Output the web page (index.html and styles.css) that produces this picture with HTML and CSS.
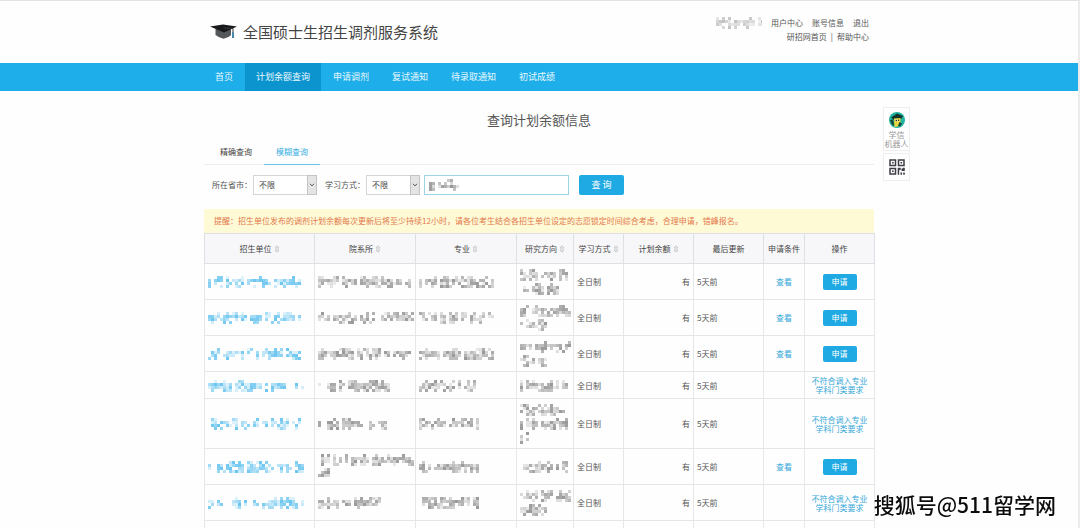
FILE: index.html
```html
<!DOCTYPE html>
<html lang="zh-CN">
<head>
<meta charset="utf-8">
<meta name="viewport" content="width=device-width, initial-scale=1">
<title>全国硕士生招生调剂服务系统</title>
<link rel="stylesheet" href="styles.css">
</head>
<body>
<svg class="sprite" aria-hidden="true">
  <symbol id="sort" viewBox="0 0 6 8"><path d="M1 3 3 .8 5 3zM1 5 3 7.2 5 5z" fill="#fff" stroke="#b9bcc0" stroke-width=".8"/></symbol>
  <symbol id="chevron" viewBox="0 0 6 4"><path d="M1 .8 3 2.9 5 .8" fill="none" stroke="#555" stroke-width="1"/></symbol>
</svg>
<header class="wrap header">
  <div class="brand">
    <svg class="cap" viewBox="0 0 27 16" aria-hidden="true">
      <path d="M5.500 5v6q3 2.500 8 3.800 5-1 7.500-3.500V5z" fill="#55585b"/>
      <path d="M0 2.600 13 .5 27 2.600 14 8.500z" fill="#17191b"/>
      <path d="M13.500 4 23 4.500V9" fill="none" stroke="#34383c" stroke-width="1"/>
      <path d="M22 8h1.800l.4 6h-2.200z" fill="#4b88ac"/>
    </svg>
    <h1 class="brand-name">全国硕士生招生调剂服务系统</h1>
  </div>
  <div class="account">
    <div class="account-row">
      <span class="mosaic faint" data-lines="49"></span>
      <a href="#">用户中心</a><a href="#">账号信息</a><a href="#">退出</a>
    </div>
    <div class="account-row tight"><a href="#">研招网首页</a><span>|</span><a href="#">帮助中心</a></div>
  </div>
</header>
<nav class="nav">
  <div class="wrap nav-items">
    <a href="#">首页</a><a href="#" class="active">计划余额查询</a><a href="#">申请调剂</a><a href="#">复试通知</a><a href="#">待录取通知</a><a href="#">初试成绩</a>
  </div>
</nav>
<main class="wrap main">
  <h2 class="title">查询计划余额信息</h2>
  <div class="tabs"><a href="#">精确查询</a><a href="#" class="active">模糊查询</a></div>
  <form class="filters">
    <label for="province">所在省市：</label>
    <span class="select"><select id="province"><option>不限</option></select><span class="arrow"><svg><use href="#chevron"/></svg></span></span>
    <label for="mode" class="label-mode">学习方式：</label>
    <span class="select narrow"><select id="mode"><option>不限</option></select><span class="arrow"><svg><use href="#chevron"/></svg></span></span>
    <span class="keyword"><input type="text" aria-label="关键字"><span class="mosaic" data-lines="30"></span></span>
    <button type="button" class="search">查 询</button>
  </form>
  <p class="notice">提醒：招生单位发布的调剂计划余额每次更新后将至少持续12小时，请各位考生结合各招生单位设定的志愿锁定时间综合考虑，合理申请，错峰报名。</p>
  <table class="grid">
    <colgroup><col class="c-unit"><col class="c-dept"><col class="c-major"><col class="c-dir"><col class="c-mode"><col class="c-left"><col class="c-time"><col class="c-cond"><col class="c-act"></colgroup>
    <thead>
      <tr>
        <th>招生单位<svg><use href="#sort"/></svg></th><th>院系所<svg><use href="#sort"/></svg></th><th>专业<svg><use href="#sort"/></svg></th><th>研究方向<svg><use href="#sort"/></svg></th><th>学习方式<svg><use href="#sort"/></svg></th><th>计划余额<svg><use href="#sort"/></svg></th><th>最后更新</th><th>申请条件</th><th>操作</th>
      </tr>
    </thead>
    <tbody>
      <tr><td><span class="mosaic blue" data-lines="93"></span></td><td><span class="mosaic" data-lines="93"></span></td><td><span class="mosaic" data-lines="75"></span></td><td><span class="mosaic" data-lines="51,42"></span></td><td>全日制</td><td class="right">有</td><td>5天前</td><td class="center"><a href="#">查看</a></td><td class="center"><button type="button" class="apply">申请</button></td></tr>
      <tr><td><span class="mosaic blue" data-lines="93"></span></td><td><span class="mosaic" data-lines="96"></span></td><td><span class="mosaic" data-lines="75"></span></td><td><span class="mosaic" data-lines="51,27"></span></td><td>全日制</td><td class="right">有</td><td>5天前</td><td class="center"><a href="#">查看</a></td><td class="center"><button type="button" class="apply">申请</button></td></tr>
      <tr><td><span class="mosaic blue" data-lines="93"></span></td><td><span class="mosaic" data-lines="93"></span></td><td><span class="mosaic" data-lines="75"></span></td><td><span class="mosaic" data-lines="51,27"></span></td><td>全日制</td><td class="right">有</td><td>5天前</td><td class="center"><a href="#">查看</a></td><td class="center"><button type="button" class="apply">申请</button></td></tr>
      <tr><td><span class="mosaic blue" data-lines="96"></span></td><td><span class="mosaic" data-lines="72"></span></td><td><span class="mosaic" data-lines="60"></span></td><td><span class="mosaic" data-lines="48"></span></td><td>全日制</td><td class="right">有</td><td>5天前</td><td></td><td class="center"><a href="#" class="reason">不符合调入专业<br>学科门类要求</a></td></tr>
      <tr><td><span class="mosaic blue" data-lines="93"></span></td><td><span class="mosaic" data-lines="69"></span></td><td><span class="mosaic" data-lines="60"></span></td><td><span class="mosaic" data-lines="51,48,9"></span></td><td>全日制</td><td class="right">有</td><td>5天前</td><td></td><td class="center"><a href="#" class="reason">不符合调入专业<br>学科门类要求</a></td></tr>
      <tr><td><span class="mosaic blue" data-lines="96"></span></td><td><span class="mosaic" data-lines="96,12"></span></td><td><span class="mosaic" data-lines="60"></span></td><td><span class="mosaic" data-lines="48"></span></td><td>全日制</td><td class="right">有</td><td>5天前</td><td class="center"><a href="#">查看</a></td><td class="center"><button type="button" class="apply">申请</button></td></tr>
      <tr><td><span class="mosaic blue" data-lines="96"></span></td><td><span class="mosaic" data-lines="69"></span></td><td><span class="mosaic" data-lines="60"></span></td><td><span class="mosaic" data-lines="51,27"></span></td><td>全日制</td><td class="right">有</td><td>5天前</td><td></td><td class="center"><a href="#" class="reason">不符合调入专业<br>学科门类要求</a></td></tr>
      <tr><td></td><td></td><td></td><td></td><td></td><td></td><td></td><td></td><td></td></tr>
    </tbody>
  </table>
  <aside class="side">
    <a href="#" class="side-box">
      <svg class="robot" viewBox="0 0 16 16" aria-hidden="true">
        <circle cx="8" cy="8" r="8" fill="#20b3a0"/>
        <path d="M2 5.500 8 1.500 14 4 12 7 5 8z" fill="#12352c"/>
        <path d="M1 8 4 7.500 5.500 14 3 13z" fill="#174c36"/>
        <path d="M5 6.500 11.500 6v4L9 14.500 5.500 15z" fill="#e6d53c"/>
        <path d="M6 7.500h4v2H6z" fill="#fff3a8"/><circle cx="7.300" cy="8.500" r=".8" fill="#222"/><circle cx="9.500" cy="8.300" r=".7" fill="#222"/>
        <path d="M10.500 10 13 11.500 11 14.500 9 14z" fill="#1b4234"/>
      </svg>
      <span>学信<br>机器人</span>
    </a>
    <a href="#" class="side-box code" aria-label="二维码">
      <svg class="qr" viewBox="0 0 16 16" aria-hidden="true">
        <g fill="none" stroke="#3e3e46" stroke-width="1.500"><path d="M1 1h5.500v5.500H1zM9.500 1H15v5.500H9.500zM1 9.500h5.500V15H1z"/></g>
        <path d="M3 3h1.600v1.600H3zM11.500 3h1.600v1.600h-1.600zM3 11.500h1.600v1.600H3zM8.700 8.700h3V11h-1.500v4.700H8.700zM12.500 9.500h1.300V8.700h2V12h-3.300zM11.500 13.500h1.600v2.200h-1.600zM14.200 13.500h1.600v2.200h-1.600z" fill="#3e3e46"/>
      </svg>
    </a>
  </aside>
</main>
<div class="watermark">搜狐号@511留学网</div>
<script src="mosaic.js"></script>
</body>
</html>
```

FILE: styles.css
```css
* { box-sizing: border-box; }
body {
  margin: 0;
  height: 100vh;
  overflow: hidden;
  border-top: 1px solid #e2e2e2;
  border-right: 2px solid #ececee;
  background: #fefefe;
  color: #555;
  font: 8px/14px "Noto Sans CJK SC", sans-serif;
}
a { color: inherit; text-decoration: none; }
h1, h2, p { margin: 0; font-weight: 400; }
button, input, select { font: inherit; }
.sprite { position: absolute; width: 0; height: 0; }
.wrap { width: 100%; max-width: 670px; margin: 0 auto; }

.header { display: flex; justify-content: space-between; height: 62px; }
.brand { display: flex; align-items: center; gap: 6px; padding-left: 6px; }
.cap { width: 27px; height: 16px; }
.brand-name { font-size: 15px; line-height: 20px; color: #444; }
.account { padding: 15px 5px 0 0; }
.account-row { display: flex; justify-content: flex-end; align-items: center; gap: 9px; }
.account-row.tight { gap: 4px; }

.nav { background: #1eaee9; color: #e8f8ff; }
.nav-items { display: flex; gap: 1px; font-size: 9px; line-height: 28px; }
.nav-items a { padding: 0 11px; }
.nav-items .active { background: #0c94cf; }

.main { position: relative; }
.title { padding-top: 18px; font-size: 13px; line-height: 22px; text-align: center; color: #555; }
.tabs { display: flex; margin-top: 8px; padding-left: 4px; border-bottom: 1px solid #eee; line-height: 25px; color: #444; }
.tabs a { padding: 0 12px; margin-bottom: -1px; border-bottom: 1px solid transparent; }
.tabs .active { border-color: #6cc4e4; color: #35aee0; }

.filters { display: flex; align-items: center; margin-top: 10px; padding-left: 8px; }
.filters label { width: 41px; white-space: nowrap; }
.filters .label-mode { margin-left: 8px; }
.select { display: grid; width: 64px; height: 20px; }
.select.narrow { width: 54px; margin-right: 4px; }
.select select, .arrow { grid-area: 1 / 1; }
.select select { appearance: none; width: 100%; padding: 0 5px; border: 1px solid #d5d5d5; border-radius: 0; background: #fff; color: #444; }
.arrow { display: grid; place-items: center; justify-self: end; width: 10px; border: 1px solid #c4c4c4; background: #e4e4e4; pointer-events: none; }
.arrow svg { width: 6px; height: 4px; }
.keyword { display: grid; align-items: center; width: 145px; }
.keyword input, .keyword .mosaic { grid-area: 1 / 1; }
.keyword input { width: 100%; height: 20px; border: 1px solid #9ed2e6; background: #fff; outline: 0; }
.keyword .mosaic { margin-left: 5px; pointer-events: none; }
.search { width: 45px; height: 20px; margin-left: 10px; padding: 0; border: 0; border-radius: 2px; background: #20aae3; color: #fff; font-size: 9px; }

.notice { margin-top: 14px; padding: 0 10px; background: #fffad6; color: #e2794b; line-height: 24px; white-space: nowrap; }

.grid { width: 100%; table-layout: fixed; border-collapse: collapse; }
.c-unit { width: 110px; }
.c-dept, .c-major { width: 101px; }
.c-dir { width: 57px; }
.c-mode { width: 50px; }
.c-left, .c-time, .c-act { width: 70px; }
.c-cond { width: 41px; }
.grid th { height: 30px; padding: 0; border: 1px solid #dfe0e3; background: #f7f7f9; color: #444; font-weight: 400; white-space: nowrap; }
.grid th svg { width: 6px; height: 8px; margin-left: 2px; vertical-align: -1px; }
.grid td { height: 27px; padding: 4px 3px 3px; border: 1px solid #e6e6e9; }
.grid .right { text-align: right; }
.grid .center { padding: 0; text-align: center; }
.center a { color: #35a8d8; }
.center .reason { display: block; line-height: 9px; }
.apply { display: block; width: 34px; height: 16px; margin: 0 auto; padding: 0; border: 0; border-radius: 2px; background: #20aae3; color: #fff; line-height: 16px; }

.mosaic { display: block; color: #777; }
.mosaic.blue { color: #38b2ea; }
.mosaic.faint { color: #aaa; }
.mosaic svg { display: block; height: 14px; }

.side { position: absolute; top: 16px; left: 100%; display: grid; gap: 2px; width: 27px; margin-left: 9px; }
.side-box { display: grid; justify-items: center; padding: 4px 0 2px; border: 1px solid #eee; background: #fff; color: #999; line-height: 9px; text-align: center; white-space: nowrap; }
.side-box span { margin-top: 2px; }
.side-box.code { padding: 5px 0; }
.robot, .qr { width: 16px; height: 16px; }

.watermark {
  position: fixed;
  right: 24px;
  bottom: 10px;
  color: #0c0c0c;
  font-size: 21px;
  font-weight: 500;
  line-height: 28px;
  text-shadow: 1px 1px 0 #fff, -1px -1px 0 #fff;
}
```

FILE: mosaic.js
```js
// Masks private text with rows of pixel blocks.
let seed = 7;
const random = () => (seed = (seed * 16807) % 2147483647) / 2147483647;
const density = [0.35, 0.85, 0.8, 0.4];

document.querySelectorAll(".mosaic").forEach((el) => {
  el.innerHTML = el.dataset.lines.split(",").map((w) => {
    let blocks = "";
    for (let x = 0; x < w; x += 3) {
      if (random() < 0.1) continue;
      density.forEach((d, row) => {
        if (random() > d) return;
        const alpha = (0.15 + random() * 0.6).toFixed(2);
        blocks += `<rect x="${x}" y="${1 + row * 3}" width="3" height="3" fill="currentColor" opacity="${alpha}"/>`;
      });
    }
    return `<svg width="${w}" height="14" viewBox="0 0 ${w} 14" aria-hidden="true">${blocks}</svg>`;
  }).join("");
});
```
